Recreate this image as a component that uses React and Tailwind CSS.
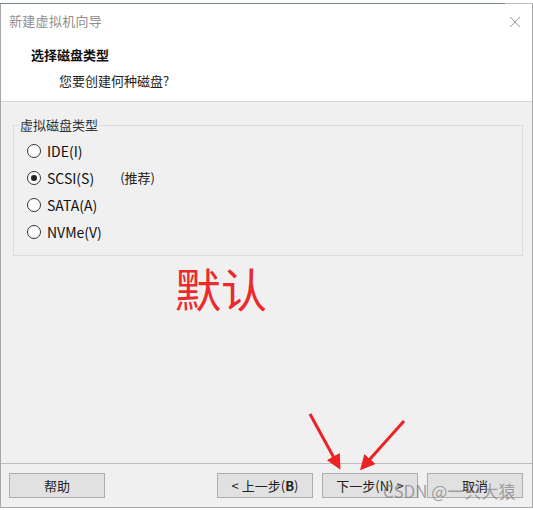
import React from "react";

const FONT = { fontFamily: '"Noto Sans CJK SC", "Noto Sans", sans-serif' };

function Radio({ label, checked, extra }) {
  return (
    <div className="flex items-center h-[27px]">
      <span className="w-[14px] h-[14px] rounded-full border border-[#333] bg-white flex items-center justify-center">
        {checked && <span className="w-[6px] h-[6px] rounded-full bg-[#222]" />}
      </span>
      <span className="ml-[6px] text-[14px] text-[#111] leading-none">{label}</span>
      {extra && <span className="ml-[26px] text-[13px] text-[#222] leading-none">{extra}</span>}
    </div>
  );
}

function Btn({ children }) {
  return (
    <div className="w-[96px] h-[25px] border border-[#adadad] bg-[#e1e1e1] flex items-center justify-center text-[13px] text-[#222] leading-none">
      {children}
    </div>
  );
}

export default function App() {
  return (
    <div className="relative w-[533px] h-[510px] bg-white overflow-hidden" style={FONT}>
      <div className="h-[3px]" />
      <div className="flex h-px">
        <div className="w-[505px] bg-[#73848f]" />
        <div className="flex-1 bg-[#b9bec2]" />
      </div>

      <div className="flex flex-col h-[504px] border-l border-r border-b border-[#a8a8a8]">
        {/* title bar */}
        <div className="h-[34px] flex items-center justify-between pl-[8px] pr-[11px] bg-white">
          <span className="text-[13px] text-[#8f8f8f] tracking-[0.3px]">新建虚拟机向导</span>
          <svg width="12" height="12" viewBox="0 0 12 12" className="mt-[1px]">
            <path d="M1 1 L11 11 M11 1 L1 11" stroke="#9a9a9a" strokeWidth="1" fill="none" />
          </svg>
        </div>

        {/* header */}
        <div className="h-[64px] bg-white border-b border-[#d5d5d5] pl-[30px] pt-[4px]">
          <div className="text-[13px] font-bold text-[#111] leading-[26px]">选择磁盘类型</div>
          <div className="text-[13px] text-[#222] leading-[26px] pl-[28px]">您要创建何种磁盘?</div>
        </div>

        {/* body */}
        <div className="flex-1 bg-[#f0f0f0] pt-[14px]">
          <fieldset className="ml-[12px] w-[510px] border border-[#dcdcdc]">
            <legend className="ml-[5px] px-[1px] text-[13px] text-[#333] leading-[18px]">虚拟磁盘类型</legend>
            <div className="pl-[13px] pt-[3px] pb-[10px]">
              <Radio label="IDE(I)" />
              <Radio label="SCSI(S)" checked extra="(推荐)" />
              <Radio label="SATA(A)" />
              <Radio label="NVMe(V)" />
            </div>
          </fieldset>
          <div className="ml-[174px] mt-[8px] text-[46px] leading-none text-[#ec2a2e]">默认</div>
        </div>

        {/* footer */}
        <div className="h-[44px] bg-[#f0f0f0] border-t border-[#bdbdbd] flex items-start pt-[9px]">
          <div className="ml-[8px]">
            <Btn>帮助</Btn>
          </div>
          <div className="ml-auto mr-[9px] flex gap-[9px]">
            <Btn>&lt; 上一步(<b>B</b>)</Btn>
            <Btn>下一步(N) &gt;</Btn>
            <Btn>取消</Btn>
          </div>
        </div>
      </div>

      {/* annotation arrows */}
      <svg className="absolute left-0 top-0 pointer-events-none" width="533" height="510">
        <defs>
          <marker id="ah" markerWidth="5" markerHeight="5" refX="4" refY="2.5" orient="auto">
            <path d="M0 0 L5 2.5 L0 5 Z" fill="#ec2226" />
          </marker>
        </defs>
        <line x1="310" y1="414" x2="339" y2="467" stroke="#ec2226" strokeWidth="3" markerEnd="url(#ah)" />
        <line x1="404" y1="421" x2="362" y2="468" stroke="#ec2226" strokeWidth="3" markerEnd="url(#ah)" />
      </svg>

      {/* watermark */}
      <div className="absolute left-[383px] top-[480px] text-[17px] leading-[22px] text-[#7d7d7d]/70 whitespace-nowrap">
        CSDN @一只大猿
      </div>
    </div>
  );
}
